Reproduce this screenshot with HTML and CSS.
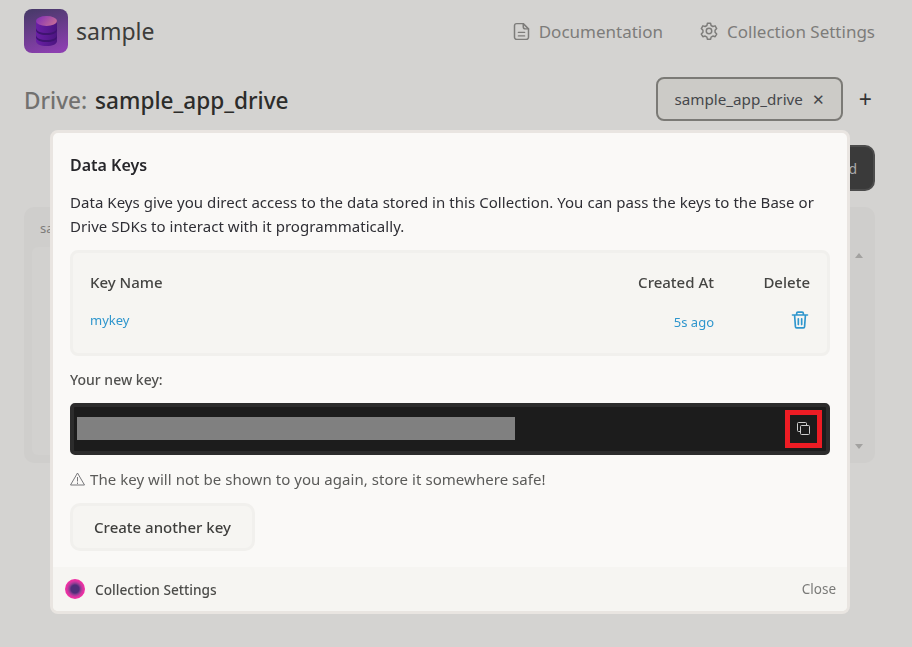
FILE: index.html
```html
<!DOCTYPE html>
<html lang="en">
<head>
  <meta charset="UTF-8">
  <meta name="viewport" content="width=device-width, initial-scale=1.0">
  <title>sample - Drive</title>
  <link rel="stylesheet" href="styles.css">
</head>
<body>
  <!-- page behind the modal -->
  <header class="topbar">
    <div class="brand">
      <svg class="brand-logo" viewBox="0 0 44 44" width="44" height="44">
        <defs>
          <linearGradient id="logoBg" x1="0.3" y1="0" x2="0.6" y2="1">
            <stop offset="0" stop-color="#4a3a6b"/>
            <stop offset="1" stop-color="#8c3fb0"/>
          </linearGradient>
          <linearGradient id="logoCan" x1="0" y1="0" x2="1" y2="0">
            <stop offset="0" stop-color="#6a1fa6"/>
            <stop offset="1" stop-color="#4b1580"/>
          </linearGradient>
          <linearGradient id="logoTop" x1="0" y1="0" x2="1" y2="0.4">
            <stop offset="0" stop-color="#7f2bb8"/>
            <stop offset="1" stop-color="#c0689a"/>
          </linearGradient>
        </defs>
        <rect width="44" height="44" rx="8" fill="url(#logoBg)"/>
        <path d="M12 12v20c0 3 4.500 5 10.500 5s10.500-2 10.500-5V12z" fill="url(#logoCan)"/>
        <path d="M12 19c0 3 4.500 5 10.500 5s10.500-2 10.500-5v2c0 3-4.500 5-10.500 5s-10.500-2-10.500-5zM12 26c0 3 4.500 5 10.500 5s10.500-2 10.500-5v2c0 3-4.500 5-10.500 5s-10.500-2-10.500-5z" fill="#3f1470"/>
        <ellipse cx="22.500" cy="12" rx="10.500" ry="5" fill="url(#logoTop)"/>
      </svg>
      <span class="brand-name">sample</span>
    </div>
    <nav class="topnav">
      <a class="topnav-link">
        <svg viewBox="0 0 24 24" width="21" height="21" fill="none" stroke="currentColor" stroke-width="1.700" stroke-linecap="round" stroke-linejoin="round">
          <path d="M14 3H6.500A2.500 2.500 0 0 0 4 5.500v13A2.500 2.500 0 0 0 6.500 21h11a2.500 2.500 0 0 0 2.500-2.500V9z"/>
          <path d="M14 3v3.500A2.500 2.500 0 0 0 16.500 9H20M8.500 13h7M8.500 17h7"/>
        </svg>
        Documentation
      </a>
      <a class="topnav-link">
        <svg viewBox="0 0 24 24" width="22" height="22" fill="none" stroke="currentColor" stroke-width="1.600" stroke-linecap="round" stroke-linejoin="round">
          <circle cx="12" cy="12" r="3"/>
          <path d="M10.300 3.500h3.400l.6 2.500 1.900 1.100 2.500-.7 1.700 2.900-1.800 1.900v2.200l1.800 1.900-1.700 2.900-2.500-.7-1.900 1.100-.6 2.500h-3.400l-.6-2.500-1.900-1.100-2.500.7-1.700-2.900 1.800-1.900v-2.200L3.600 9.300l1.700-2.900 2.500.7 1.900-1.100z"/>
        </svg>
        Collection Settings
      </a>
    </nav>
  </header>

  <section class="drive-head">
    <h1 class="drive-title"><span class="muted">Drive:</span> sample_app_drive</h1>
    <div class="tabs">
      <div class="tab">sample_app_drive <span class="tab-x">✕</span></div>
      <span class="tab-add">+</span>
    </div>
  </section>

  <div class="actions">
    <button class="upload-btn">Upload</button>
  </div>

  <section class="files">
    <div class="files-path">sa</div>
    <div class="files-body">
      <div class="files-list"></div>
      <div class="files-scroll">
        <span class="arrow-up"></span>
        <span class="arrow-down"></span>
      </div>
    </div>
  </section>

  <!-- data keys modal -->
  <div class="overlay">
    <div class="modal">
      <div class="modal-body">
        <h2 class="modal-title">Data Keys</h2>
        <p class="modal-intro">Data Keys give you direct access to the data stored in this Collection. You can pass the keys to the Base or Drive SDKs to interact with it programmatically.</p>

        <div class="keys">
          <div class="keys-row keys-head">
            <span>Key Name</span>
            <span class="col-created">Created At</span>
            <span class="col-delete">Delete</span>
          </div>
          <div class="keys-row keys-item">
            <span>mykey</span>
            <span class="col-created key-age">5s ago</span>
            <span class="col-delete">
              <svg viewBox="0 0 24 24" width="20" height="20" fill="none" stroke="currentColor" stroke-width="2" stroke-linecap="round" stroke-linejoin="round">
                <path d="M3 6h18M8 6V4a1.500 1.500 0 0 1 1.500-1.500h5A1.500 1.500 0 0 1 16 4v2M5.500 6l1 14a1.500 1.500 0 0 0 1.500 1.500h8a1.500 1.500 0 0 0 1.500-1.500l1-14M10 10.500v7M14 10.500v7"/>
              </svg>
            </span>
          </div>
        </div>

        <div class="newkey-label">Your new key:</div>
        <div class="newkey">
          <div class="newkey-redacted"></div>
          <div class="newkey-copy">
            <svg viewBox="0 0 14 14" width="14" height="14" fill="none" stroke="#cfcfcf" stroke-width="1">
              <rect x="4.500" y="4.500" width="9" height="9" rx="1"/>
              <path d="M4.500 10.500h-2a1 1 0 0 1-1-1v-7a1 1 0 0 1 1-1h7a1 1 0 0 1 1 1v2"/>
            </svg>
          </div>
        </div>
        <p class="newkey-warn">
          <svg viewBox="0 0 15 14" width="15" height="14" fill="none" stroke="#77777a" stroke-width="1" stroke-linejoin="round">
            <path d="M7.500 1 14.500 13H.5z"/>
            <path d="M7.500 5v4.500M7.500 10.500v1.500"/>
          </svg>
          The key will not be shown to you again, store it somewhere safe!
        </p>
        <button class="another-btn">Create another key</button>
      </div>
      <footer class="modal-foot">
        <span class="foot-dot"></span>
        <span class="foot-title">Collection Settings</span>
        <span class="foot-close">Close</span>
      </footer>
    </div>
  </div>
</body>
</html>
```

FILE: styles.css
```css
* {
  box-sizing: border-box;
}
html, body {
  height: 100%;
}
body {
  margin: 0;
  padding: 9px 37px 0 24px;
  background: #d4d3d1;
  color: #3a3a38;
  font-family: "Noto Sans", "Open Sans", sans-serif;
  overflow: hidden;
}

/* top bar */
.topbar {
  display: flex;
  justify-content: space-between;
  align-items: center;
  height: 44px;
}
.brand {
  display: flex;
  align-items: center;
  gap: 8px;
}
.brand-name {
  font-size: 23px;
  color: #3d3d3b;
}
.topnav {
  display: flex;
  gap: 35px;
}
.topnav-link {
  display: flex;
  align-items: center;
  gap: 7px;
  font-size: 17px;
  color: #7d7c7a;
}

/* drive header */
.drive-head {
  display: flex;
  justify-content: space-between;
  align-items: center;
  margin-top: 24px;
}
.drive-title {
  margin: 2px 0 0;
  font-size: 22.6px;
  font-weight: 500;
  color: #2c2c2a;
}
.muted {
  margin-right: 2px;
  color: #72716f;
}
.tabs {
  display: flex;
  align-items: center;
  gap: 16px;
}
.tab {
  display: flex;
  align-items: center;
  gap: 9px;
  height: 44px;
  padding: 0 16px 0 17px;
  border: 2px solid #7b7a76;
  border-radius: 8px;
  background: #cccbc7;
  font-size: 15.2px;
  color: #45474b;
}
.tab-x {
  font-size: 15px;
}
.tab-add {
  font-size: 23px;
  line-height: 1;
  color: #333;
  margin-right: 3px;
}

.actions {
  display: flex;
  justify-content: flex-end;
  margin-top: 24px;
}
.upload-btn {
  width: 100px;
  height: 46px;
  border: 2px solid #4c4c4c;
  border-radius: 10px;
  background: #3a3a3a;
  color: #aaa;
  font: inherit;
  font-size: 14px;
  text-align: right;
  padding-right: 16px;
}

.files {
  margin-top: 16px;
  height: 256px;
  padding: 12px 0 8px 8px;
  border-radius: 10px;
  background: #cfcecc;
}
.files-path {
  height: 28px;
  padding-left: 8px;
  font-size: 13px;
  color: #7d7c7a;
}
.files-body {
  display: flex;
  height: 208px;
}
.files-list {
  flex: 1;
  border-radius: 6px 0 0 6px;
  background: #d2d1cf;
}
.files-scroll {
  display: flex;
  flex-direction: column;
  justify-content: space-between;
  align-items: center;
  width: 25px;
  padding: 6px 8px 6px 0;
}
.arrow-up, .arrow-down {
  width: 0;
  height: 0;
  border-left: 4px solid transparent;
  border-right: 4px solid transparent;
}
.arrow-up {
  border-bottom: 5px solid #a3a2a0;
}
.arrow-down {
  border-top: 5px solid #a3a2a0;
}

/* modal */
.overlay {
  position: fixed;
  top: 130px;
  left: 50px;
}
.modal {
  width: 800px;
  height: 484px;
  display: flex;
  flex-direction: column;
  border: 3px solid #e9e5e1;
  border-radius: 8px;
  background: #faf9f7;
  overflow: hidden;
}
.modal-body {
  flex: 1;
  padding: 21px 17px 0;
}
.modal-title {
  margin: 0;
  font-size: 16px;
  line-height: 22px;
  font-weight: 600;
  color: #26262a;
}
.modal-intro {
  margin: 14px 0 0;
  font-size: 15px;
  line-height: 24px;
  letter-spacing: 0.046px;
  color: #2f2f35;
}
.keys {
  margin-top: 12px;
  height: 106px;
  padding: 19px 17px 0;
  border: 3px solid #f1f0ed;
  border-radius: 8px;
  background: #f6f5f2;
}
.keys-row {
  display: flex;
  align-items: center;
}
.keys-row > :first-child {
  flex: 1;
}
.col-created {
  width: 150px;
  text-align: right;
}
.col-delete {
  width: 96px;
  text-align: right;
}
.keys-head {
  font-size: 15px;
  font-weight: 500;
  color: #454543;
}
.keys-item {
  margin-top: 18px;
  font-size: 13px;
  color: #2f96cd;
}
.key-age {
  position: relative;
  top: 2px;
}
.keys-item svg {
  display: block;
  margin: 0 0 0 auto;
}

.newkey-label {
  margin-top: 14px;
  font-size: 14px;
  line-height: 20px;
  font-weight: 500;
  color: #51514f;
}
.newkey {
  display: flex;
  justify-content: space-between;
  align-items: center;
  height: 52px;
  margin-top: 13px;
  padding: 0 4px 0 3px;
  border: 4px solid #2c2c2c;
  border-radius: 5px;
  background: #1c1c1c;
}
.newkey-redacted {
  width: 438px;
  height: 23px;
  margin-bottom: 2px;
  background: #808080;
}
.newkey-copy {
  display: flex;
  justify-content: center;
  align-items: center;
  width: 37px;
  height: 38px;
  border: 5px solid #ed1c24;
}
.newkey-copy svg {
  margin: 0 2px 3px 0;
}
.newkey-warn {
  display: flex;
  align-items: center;
  gap: 5px;
  margin: 13px 0 0;
  font-size: 15px;
  line-height: 22px;
  letter-spacing: 0.05px;
  color: #5b5b59;
}
.another-btn {
  display: block;
  width: 185px;
  height: 48px;
  margin-top: 13px;
  border: 3px solid #f1f0ed;
  border-radius: 10px;
  background: #f6f5f2;
  color: #3f3f3d;
  font: inherit;
  font-size: 15px;
  font-weight: 500;
}
.modal-foot {
  display: flex;
  align-items: center;
  height: 44px;
  padding: 0 11px 0 12px;
  background: #f6f5f2;
}
.foot-dot {
  width: 20px;
  height: 20px;
  border-radius: 50%;
  background: radial-gradient(circle closest-side, #4f2d79 0 40%, #8a3a90 55%, #c7389f 72%, #ee2fa3 90%);
}
.foot-title {
  flex: 1;
  margin-left: 10px;
  font-size: 13.7px;
  font-weight: 500;
  color: #4c4c4a;
}
.foot-close {
  font-size: 13.500px;
  color: #7a7a78;
}
```
